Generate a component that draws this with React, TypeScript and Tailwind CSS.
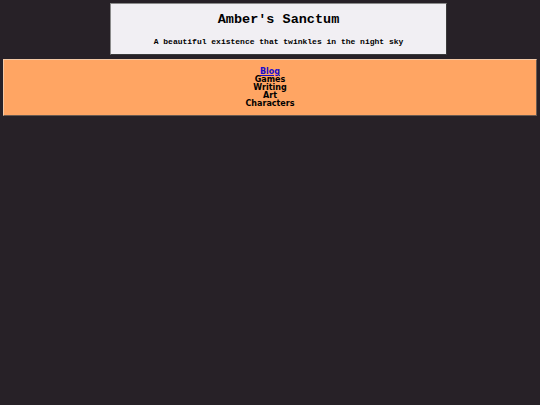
const NAV_ITEMS = [
  { href: '#blog', label: 'Blog', link: true },
  { href: '#games', label: 'Games' },
  { href: '#writing', label: 'Writing' },
  { href: '#art', label: 'Art' },
  { href: '#characters', label: 'Characters' },
];

export default function App() {
  return (
    <div className="min-h-screen bg-[#272127] pt-[3px]">
      <header className="ml-[110px] w-[337px] h-[52px] bg-[#f1eff3] border border-[#8a8a8a] border-r-[#3a3a3a] border-b-[#3a3a3a] flex flex-col items-center font-['Liberation_Mono',monospace] text-black">
        <h1 className="mt-[8px] text-[13.5px] leading-[16px] font-bold">Amber's Sanctum</h1>
        <p className="mt-[9px] text-[8px] leading-[10px] font-bold">
          A beautiful existence that twinkles in the night sky
        </p>
      </header>

      <nav className="mx-[3px] mt-[4px] h-[57px] bg-[#ffa563] border border-[#f3c9a6] border-r-[#6a5a50] border-b-[#6a5a50] flex flex-col items-center pt-[8px] font-['DejaVu_Sans',sans-serif] font-bold text-[8px] leading-[8px] text-black">
        {NAV_ITEMS.map((item) =>
          item.link ? (
            <a key={item.label} href={item.href} className="text-[#1a0dcc] underline">
              {item.label}
            </a>
          ) : (
            <span key={item.label}>{item.label}</span>
          )
        )}
      </nav>
    </div>
  );
}
